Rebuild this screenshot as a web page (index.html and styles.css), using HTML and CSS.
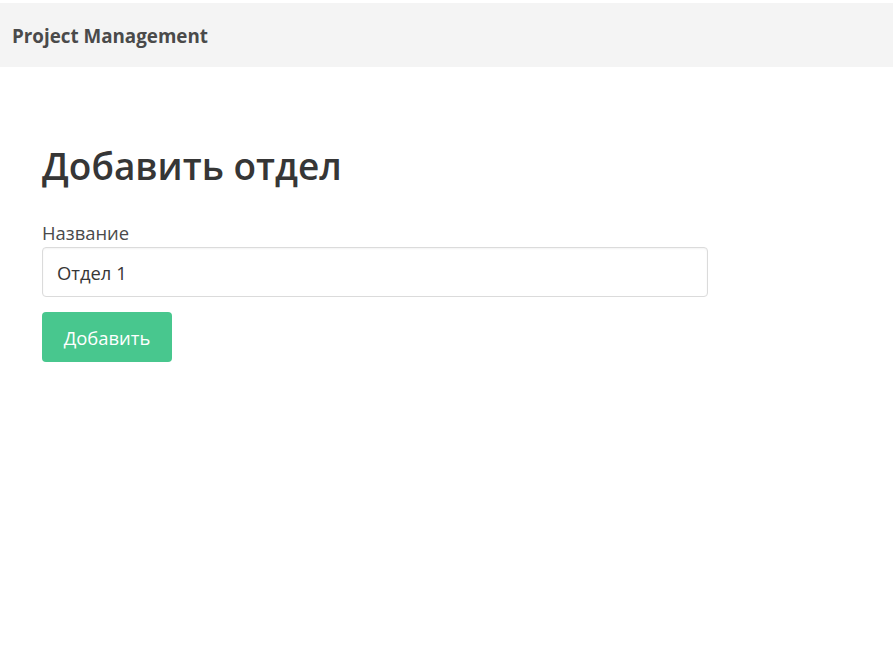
FILE: index.html
```html
<!DOCTYPE html>
<html lang="ru">
<head>
<meta charset="utf-8">
<title>Project Management</title>
<link rel="stylesheet" href="styles.css">
</head>
<body>
<nav class="navbar">
  <span class="brand">Project Management</span>
</nav>
<main class="section">
  <h1 class="title">Добавить отдел</h1>
  <form class="form">
    <label class="label" for="name">Название</label>
    <input class="input" id="name" type="text" value="Отдел 1">
    <button class="button" type="button">Добавить</button>
  </form>
</main>
</body>
</html>
```
FILE: styles.css
```css
* { box-sizing: border-box; }
html, body { margin: 0; padding: 0; background: #fff; }
body {
  font-family: "Open Sans", "Noto Sans", sans-serif;
  color: #4a4a4a;
  padding-top: 3px;
}
.navbar {
  height: 64px;
  background: #f4f4f4;
  display: flex;
  align-items: center;
  padding: 2px 12px 0;
}
.brand {
  font-weight: 700;
  font-size: 18.8px;
  color: #4a4a4a;
}
.section {
  padding: 77px 42px 0;
}
.title {
  margin: 0 0 33px;
  font-size: 37px;
  font-weight: 600;
  color: #363636;
  line-height: 1.2;
}
.form {
  display: flex;
  flex-direction: column;
  align-items: flex-start;
}
.label {
  font-size: 18.4px;
  line-height: 24px;
  color: #4a4a4a;
  margin-bottom: 2px;
}
.input {
  width: 666px;
  height: 50px;
  border: 1px solid #dbdbdb;
  border-radius: 4px;
  padding: 0 14px;
  font: inherit;
  font-size: 18.4px;
  color: #363636;
  box-shadow: inset 0 1px 2px rgba(10,10,10,0.05);
  margin-bottom: 15px;
}
.button {
  height: 50px;
  width: 130px;
  border: none;
  border-radius: 4px;
  background: #48c78e;
  color: #fff;
  font: inherit;
  font-size: 18.4px;
  padding: 0;
}
```
